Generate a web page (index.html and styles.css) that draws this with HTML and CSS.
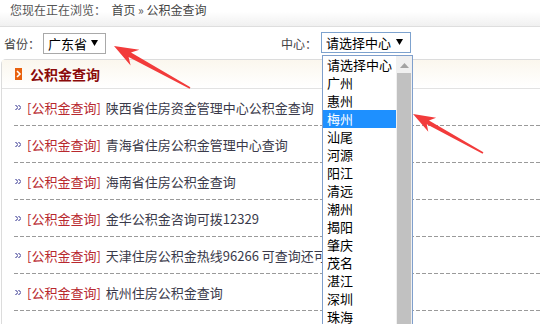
FILE: index.html
```html
<!DOCTYPE html>
<html lang="zh-CN">
<head>
    <meta charset="UTF-8">
    <title>公积金查询</title>
    <link rel="stylesheet" href="styles.css">
</head>
<body>

    <div class="crumb">您现在正在浏览：&nbsp; <a>首页</a> » <a>公积金查询</a></div>

    <div class="filter">
        <span class="label">省份：</span>
        <div class="sel sel-prov">广东省
            <svg class="caret" width="7" height="6" viewBox="0 0 7 6"><polygon points="0,0 7,0 3.5,6" fill="#000"/></svg>
        </div>
        <span class="label label-center">中心：</span>
        <div class="sel sel-center">请选择中心
            <svg class="caret" width="7" height="6" viewBox="0 0 7 6"><polygon points="0,0 7,0 3.5,6" fill="#000"/></svg>
        </div>
    </div>

    <div class="panel">
        <div class="panel-head">
            <svg class="head-icon" width="7" height="12" viewBox="0 0 7 12">
                <rect width="7" height="12" fill="#e8610e"/>
                <polyline points="2,3 5,6 2,9" fill="none" stroke="#fff" stroke-width="1.6"/>
            </svg>
            <span>公积金查询</span>
        </div>
        <ul class="news">
            <li><svg class="dot" width="6" height="5" viewBox="0 0 6 5"><path d="M0 0h2v1H0zM3 0h2v1H3zM1 1h2v1H1zM4 1h2v1H4zM2 2h1v1H2zM5 2h1v1H5zM1 3h2v1H1zM4 3h2v1H4zM0 4h2v1H0zM3 4h2v1H3z" fill="#8f8fc2"/></svg><em>[公积金查询]</em>陕西省住房资金管理中心公积金查询</li>
            <li><svg class="dot" width="6" height="5" viewBox="0 0 6 5"><path d="M0 0h2v1H0zM3 0h2v1H3zM1 1h2v1H1zM4 1h2v1H4zM2 2h1v1H2zM5 2h1v1H5zM1 3h2v1H1zM4 3h2v1H4zM0 4h2v1H0zM3 4h2v1H3z" fill="#8f8fc2"/></svg><em>[公积金查询]</em>青海省住房公积金管理中心查询</li>
            <li><svg class="dot" width="6" height="5" viewBox="0 0 6 5"><path d="M0 0h2v1H0zM3 0h2v1H3zM1 1h2v1H1zM4 1h2v1H4zM2 2h1v1H2zM5 2h1v1H5zM1 3h2v1H1zM4 3h2v1H4zM0 4h2v1H0zM3 4h2v1H3z" fill="#8f8fc2"/></svg><em>[公积金查询]</em>海南省住房公积金查询</li>
            <li><svg class="dot" width="6" height="5" viewBox="0 0 6 5"><path d="M0 0h2v1H0zM3 0h2v1H3zM1 1h2v1H1zM4 1h2v1H4zM2 2h1v1H2zM5 2h1v1H5zM1 3h2v1H1zM4 3h2v1H4zM0 4h2v1H0zM3 4h2v1H3z" fill="#8f8fc2"/></svg><em>[公积金查询]</em>金华公积金咨询可拨12329</li>
            <li><svg class="dot" width="6" height="5" viewBox="0 0 6 5"><path d="M0 0h2v1H0zM3 0h2v1H3zM1 1h2v1H1zM4 1h2v1H4zM2 2h1v1H2zM5 2h1v1H5zM1 3h2v1H1zM4 3h2v1H4zM0 4h2v1H0zM3 4h2v1H3z" fill="#8f8fc2"/></svg><em>[公积金查询]</em>天津住房公积金热线96266 可查询还可进行业务咨询</li>
            <li><svg class="dot" width="6" height="5" viewBox="0 0 6 5"><path d="M0 0h2v1H0zM3 0h2v1H3zM1 1h2v1H1zM4 1h2v1H4zM2 2h1v1H2zM5 2h1v1H5zM1 3h2v1H1zM4 3h2v1H4zM0 4h2v1H0zM3 4h2v1H3z" fill="#8f8fc2"/></svg><em>[公积金查询]</em>杭州住房公积金查询</li>
        </ul>
    </div>

    <!-- 打开的下拉列表 -->
    <div class="drop">
        <ul class="opts">
            <li>请选择中心</li>
            <li>广州</li>
            <li>惠州</li>
            <li class="on">梅州</li>
            <li>汕尾</li>
            <li>河源</li>
            <li>阳江</li>
            <li>清远</li>
            <li>潮州</li>
            <li>揭阳</li>
            <li>肇庆</li>
            <li>茂名</li>
            <li>湛江</li>
            <li>深圳</li>
            <li>珠海</li>
        </ul>
        <div class="bar">
            <svg class="bar-up" width="9" height="5" viewBox="0 0 9 5"><polygon points="0,5 9,5 4.5,0" fill="#a3a3a3"/></svg>
            <div class="thumb"></div>
        </div>
    </div>

    <!-- 标注箭头 -->
    <svg class="marks" width="540" height="324" viewBox="0 0 540 324">
        <polygon fill="#f23b3b" points="114,46 139.4,49.7 131,52.5 190.4,87.3 189.6,88.7 128.6,56.9 130.6,65.5"/>
        <polygon fill="#f23b3b" points="413,114 436.1,117.7 429,120.4 483.4,152.3 482.6,153.7 426.8,124.2 428.3,131.7"/>
    </svg>

</body>
</html>
```

FILE: styles.css
```css
html,body,div,ul,li{
    margin: 0;
    padding: 0;
}

ul,li{
    list-style: none;
}

body{
    width: 540px;
    height: 324px;
    overflow: hidden;
    position: relative;
    font-family: "Noto Sans CJK SC", "DejaVu Sans", sans-serif;
    font-size: 12px;
    color: #333;
    background-color: #fff;
}

.crumb{
    height: 26px;
    line-height: 20px;
    padding-left: 10px;
    color: #555;
    background: linear-gradient(#fff 45%, #f0f0f0);
    border-bottom: 1px solid #dedede;
}

.crumb a{
    color: #444;
}

.filter{
    height: 32px;
    display: flex;
    align-items: center;
    padding-left: 4px;
}

.label{
    width: 39px;
    color: #444;
    font-size: 12px;
}

.label-center{
    margin-left: 175px;
}

.sel{
    height: 19px;
    line-height: 19px;
    padding-left: 4px;
    display: flex;
    align-items: center;
    font-size: 13px;
    color: #000;
    border: 1px solid #a9a9a9;
    background-color: #fff;
}

.sel-prov{
    width: 57px;
}

.sel-center{
    width: 84px;
    margin-left: 1px;
    border-color: #7da2ce;
    margin-top: -2px;
}

.caret{
    margin-left: auto;
    margin-right: 7px;
}

.panel{
    margin-left: 1px;
    border: 1px solid #dcdcdc;
    border-right: none;
    border-radius: 5px 0 0 0;
    height: 300px;
}

.panel-head{
    height: 28px;
    display: flex;
    align-items: center;
    padding-left: 13px;
    background: linear-gradient(#fbf7ee, #fff);
    border-bottom: 1px solid #e2e2e2;
}

.panel-head span{
    margin-left: 8px;
    font-size: 14px;
    font-weight: bold;
    color: #8b0a0a;
}

.news li{
    margin-left: 12px;
    height: 37px;
    display: flex;
    align-items: center;
    white-space: nowrap;
    font-size: 13px;
    color: #3a3a4a;
    background: repeating-linear-gradient(to right, #9a9a9a 0 4px, transparent 4px 6px) left bottom / 100% 1px no-repeat;
}

.news em{
    font-style: normal;
    color: #b8282e;
    margin-right: 5px;
}

.dot{
    margin-left: 1px;
    margin-right: 6px;
    margin-top: -1px;
}

.drop{
    position: absolute;
    left: 322px;
    top: 55px;
    width: 89px;
    height: 280px;
    display: flex;
    border: 1px solid #7f9fcc;
    border-bottom: none;
    background-color: #fff;
}

.opts{
    width: 73px;
}

.opts li{
    height: 18px;
    line-height: 18px;
    padding-left: 4px;
    font-size: 13px;
    color: #000;
}

.opts .on{
    background-color: #1e90ff;
    color: #fff;
}

.bar{
    width: 16px;
    background-color: #f0f0f0;
    display: flex;
    flex-direction: column;
    align-items: center;
}

.bar-up{
    margin-top: 7px;
}

.thumb{
    margin-top: 5px;
    width: 14px;
    flex: 1;
    background-color: #c1c1c1;
}

.marks{
    position: absolute;
    left: 0;
    top: 0;
    pointer-events: none;
}
```
